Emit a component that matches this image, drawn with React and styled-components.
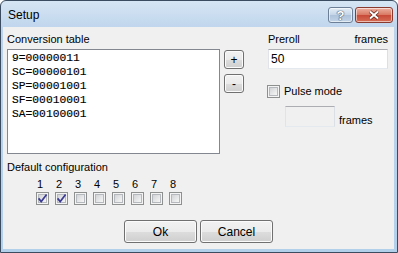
import styled, { createGlobalStyle } from "styled-components";

const Global = createGlobalStyle`
  body {
    margin: 0;
    background: #ffffff;
    font-family: "Liberation Sans", Arial, sans-serif;
  }
  * { box-sizing: border-box; }
`;

const Window = styled.div`
  width: 398px;
  height: 253px;
  border: 1px solid #3b4c60;
  border-radius: 6px 6px 0 0;
  background: linear-gradient(#d6e5f4, #bdd4eb 30px, #b3d0ea);
  padding: 0 3px 3px 2px;
  display: flex;
  flex-direction: column;
`;

const TitleBar = styled.div`
  height: 26px;
  display: flex;
  justify-content: space-between;
  align-items: flex-start;
  padding-left: 5px;
`;

const Title = styled.div`
  font-size: 12px;
  line-height: 14px;
  margin-top: 7px;
  color: #000;
`;

const TitleButtons = styled.div`
  display: flex;
  gap: 2px;
  margin-top: 6px;
  margin-right: 1px;
`;

const CaptionButton = styled.div`
  width: ${(p) => p.$w}px;
  height: 16px;
  border-radius: 3px;
  border: 1px solid ${(p) => (p.$close ? "#8b3a30" : "#6c7f96")};
  box-shadow: inset 0 0 0 1px rgba(255, 255, 255, 0.55);
  background: ${(p) =>
    p.$close
      ? "linear-gradient(#ecb1a2, #d97862 50%, #c84a38 51%, #d66d55)"
      : "linear-gradient(#e4edf6, #c4d5e7 50%, #aec3da 51%, #c1d3e6)"};
  display: flex;
  align-items: center;
  justify-content: center;
`;

const HelpGlyph = styled.span`
  font-family: "Liberation Sans", Arial, sans-serif;
  font-weight: bold;
  font-size: 13px;
  line-height: 13px;
  color: #ffffff;
  text-shadow: 0 0 1px #3c4f66, 0 0 1px #3c4f66, 0 0 1px #3c4f66;
`;

const Client = styled.div`
  flex: 1;
  background: #f0f0f0;
  padding: 0 4px 0 4px;
  display: flex;
  flex-direction: column;
  font-size: 11px;
  color: #000;
`;

const TopRow = styled.div`
  display: flex;
  align-items: flex-start;
  padding-top: 5px;
`;

const LeftCol = styled.div`
  width: 213px;
`;

const Label = styled.div`
  height: 14px;
  line-height: 14px;
  margin-bottom: 3px;
`;

const ListBox = styled.div`
  height: 105px;
  border: 1px solid #828790;
  background: #ffffff;
  padding: 1px 0 0 4px;
  font-family: "Liberation Mono", "Courier New", monospace;
  font-size: 11.3px;
  line-height: 14px;
  -webkit-text-stroke: 0.15px #000;
`;

const SmallButtons = styled.div`
  display: flex;
  flex-direction: column;
  gap: 5px;
  margin-left: 4px;
  padding-top: 18px;
`;

const PushButton = styled.button`
  width: ${(p) => p.$w}px;
  height: ${(p) => p.$h}px;
  padding: 0;
  border: 1px solid #707070;
  border-radius: 3px;
  box-shadow: inset 0 0 0 1px #fbfbfb;
  background: linear-gradient(#f2f2f2, #ebebeb 50%, #dddddd 51%, #cfcfcf);
  font-family: "Liberation Sans", Arial, sans-serif;
  font-size: ${(p) => p.$fs || 11}px;
  line-height: 1;
  color: #000;
`;

const RightCol = styled.div`
  width: 121px;
  margin-left: 23px;
  display: flex;
  flex-direction: column;
`;

const LabelRow = styled.div`
  display: flex;
  justify-content: space-between;
  height: 14px;
  line-height: 14px;
  margin-bottom: 3px;
  padding-left: 1px;
`;

const TextBox = styled.div`
  width: ${(p) => p.$w}px;
  height: ${(p) => p.$h}px;
  margin-left: ${(p) => p.$ml || 0}px;
  border: 1px solid #abadb3;
  border-color: #abadb3 #dbdfe6 #e3e9ef #e2e3ea;
  background: ${(p) => (p.$disabled ? "#f0f0f0" : "#ffffff")};
  padding-left: 2px;
  font-size: 12px;
  line-height: 18px;
`;

const CheckRow = styled.label`
  display: flex;
  align-items: center;
  gap: 4px;
  margin-top: 15px;
  line-height: 14px;
`;

const FramesRow = styled.div`
  display: flex;
  align-items: flex-end;
  gap: 4px;
  margin-top: 8px;
  padding-left: 18px;
  line-height: 14px;
`;

const Box = styled.span`
  width: 13px;
  height: 13px;
  border: 1px solid #8e8f8f;
  background: #f4f4f4;
  padding: 1px;
  display: flex;
  flex: none;
`;

const BoxInner = styled.span`
  flex: 1;
  border: 1px solid #b5b8bc;
  background: linear-gradient(135deg, #d2d4d6, #f6f6f6);
  position: relative;
`;

const Tick = styled.svg`
  position: absolute;
  left: -3px;
  top: -3px;
`;

const Section = styled.div`
  margin-top: 6px;
`;

const BitGrid = styled.div`
  display: grid;
  grid-template-columns: repeat(8, 19px);
  padding-left: 29px;
  margin-top: 1px;
`;

const Bit = styled.div`
  display: flex;
  flex-direction: column;
  gap: 1px;
`;

const BitNumber = styled.div`
  height: 14px;
  line-height: 14px;
  padding-left: 1px;
`;

const ButtonRow = styled.div`
  display: flex;
  justify-content: center;
  gap: 3px;
  margin-top: 15px;
`;

const Checkbox = ({ checked }) => (
  <Box>
    <BoxInner>
      {checked && (
        <Tick width="13" height="13" viewBox="0 0 13 13">
          <path
            d="M2.6 6.4 L5.2 9.6 L10.6 2.6"
            fill="none"
            stroke="#3b3b93"
            strokeWidth="1.7"
          />
        </Tick>
      )}
    </BoxInner>
  </Box>
);

const CloseGlyph = () => (
  <svg width="14" height="10" viewBox="0 0 14 10">
    <path d="M3 1.5 L11 8.5 M11 1.5 L3 8.5" stroke="#5a1f16" strokeWidth="3.4" />
    <path d="M3 1.5 L11 8.5 M11 1.5 L3 8.5" stroke="#ffffff" strokeWidth="2" />
  </svg>
);

const rows = ["9=00000011", "SC=00000101", "SP=00001001", "SF=00010001", "SA=00100001"];
const bits = [1, 2, 3, 4, 5, 6, 7, 8];

export default function App() {
  return (
    <>
      <Global />
      <Window>
        <TitleBar>
          <Title>Setup</Title>
          <TitleButtons>
            <CaptionButton $w={25}>
              <HelpGlyph>?</HelpGlyph>
            </CaptionButton>
            <CaptionButton $w={38} $close>
              <CloseGlyph />
            </CaptionButton>
          </TitleButtons>
        </TitleBar>
        <Client>
          <TopRow>
            <LeftCol>
              <Label>Conversion table</Label>
              <ListBox>
                {rows.map((r) => (
                  <div key={r}>{r}</div>
                ))}
              </ListBox>
            </LeftCol>
            <SmallButtons>
              <PushButton $w={20} $h={19} $fs={12}>+</PushButton>
              <PushButton $w={20} $h={19} $fs={12}>-</PushButton>
            </SmallButtons>
            <RightCol>
              <LabelRow>
                <span>Preroll</span>
                <span>frames</span>
              </LabelRow>
              <TextBox $w={120} $h={20} $ml={1}>50</TextBox>
              <CheckRow>
                <Checkbox />
                <span>Pulse mode</span>
              </CheckRow>
              <FramesRow>
                <TextBox $w={50} $h={21} $disabled />
                <span>frames</span>
              </FramesRow>
            </RightCol>
          </TopRow>
          <Section>
            <Label>Default configuration</Label>
            <BitGrid>
              {bits.map((b) => (
                <Bit key={b}>
                  <BitNumber>{b}</BitNumber>
                  <Checkbox checked={b <= 2} />
                </Bit>
              ))}
            </BitGrid>
          </Section>
          <ButtonRow>
            <PushButton $w={73} $h={23} $fs={12}>Ok</PushButton>
            <PushButton $w={73} $h={23} $fs={12}>Cancel</PushButton>
          </ButtonRow>
        </Client>
      </Window>
    </>
  );
}
